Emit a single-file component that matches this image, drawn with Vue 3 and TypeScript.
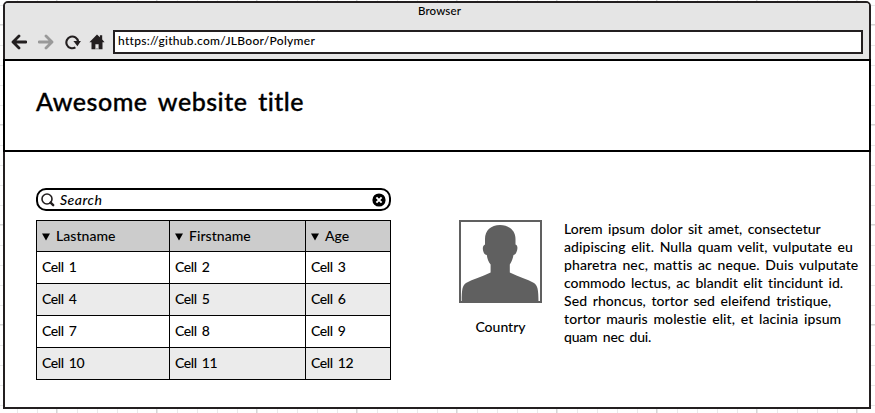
<script setup lang="ts">
const columns: string[] = ['Lastname', 'Firstname', 'Age']
const rows: string[][] = [0, 3, 6, 9].map((n) => [1, 2, 3].map((i) => `Cell ${n + i}`))

interface Line {
  text: string
  fit: string
}
const bio: Line[] = [
  { text: 'Lorem ipsum dolor sit amet, consectetur', fit: 'snug' },
  { text: 'adipiscing elit. Nulla quam velit, vulputate eu', fit: 'loose' },
  { text: 'pharetra nec, mattis ac neque. Duis vulputate', fit: 'looser' },
  { text: 'commodo lectus, ac blandit elit tincidunt id.', fit: 'snug' },
  { text: 'Sed rhoncus, tortor sed eleifend tristique,', fit: 'loose' },
  { text: 'tortor mauris molestie elit, et lacinia ipsum', fit: 'looser' },
  { text: 'quam nec dui.', fit: 'tight' },
]
</script>

<template>
  <div class="canvas">
    <div class="browser">
      <header class="chrome">
        <div class="window-title">Browser</div>
        <div class="toolbar">
          <svg class="icon" viewBox="0 0 16 16"><path d="M15 8H2.5M8 2L2 8l6 6" /></svg>
          <svg class="icon forward" viewBox="0 0 16 16"><path d="M1 8h12.5M8 2l6 6-6 6" /></svg>
          <svg class="icon refresh" viewBox="0 0 16 16">
            <path d="M10.4 13.4A5.9 5.9 0 1 1 13.1 7.5" />
            <path class="solid" d="M8.4 7.1h7.5l-3.5 5.2z" />
          </svg>
          <svg class="icon home" viewBox="0 0 16 16">
            <path class="solid" d="M8 .6L.4 8.2h2.1v7.1h3.9v-5h3.2v5h3.9V8.2h2.1L13.2 5.5V1.3h-2.3v1.9z" />
            <path class="step" d="M6.4 14.8h3.2" />
          </svg>
          <div class="address">https://github.com/JLBoor/Polymer</div>
        </div>
      </header>

      <section class="banner"><h1>Awesome website title</h1></section>

      <main class="content">
        <div class="listing">
          <div class="search">
            <svg class="glass" viewBox="0 0 14 14"><circle cx="6" cy="6" r="5" /><path d="M9.6 9.6l2.6 2.6" /></svg>
            <span>Search</span>
            <svg class="clear" viewBox="0 0 14 14"><circle cx="7" cy="7" r="6.6" /><path d="M4.4 4.4l5.2 5.2M9.6 4.4L4.4 9.6" /></svg>
          </div>
          <div class="table">
            <div v-for="c in columns" :key="c" class="cell head">
              <svg class="caret" viewBox="0 0 9 8"><path d="M0 0h9L4.5 8z" /></svg>{{ c }}
            </div>
            <template v-for="(row, r) in rows" :key="r">
              <div v-for="cell in row" :key="cell" class="cell" :class="{ striped: r % 2 === 1 }">{{ cell }}</div>
            </template>
          </div>
        </div>

        <figure class="profile">
          <svg class="avatar" viewBox="0 0 83 83">
            <rect x="1" y="1" width="81" height="81" />
            <path d="M41 5C50 5 56.5 10.5 56.5 19v5.5C59 25.5 58.8 29 57.5 32 56.6 34.3 55.5 35 54.5 35 53.8 39 52.5 42 50.8 44.5V52.5C60 57 68 59 75 63 78.5 65.5 79.5 69 79.5 82H2.7C2.7 69 3.5 65.5 7 63 14 59 22.5 57 31.6 52.5V44.5C29.5 42 28.3 39 27.8 35 26.5 35 25.4 34.3 24.5 32 23.3 29 23.6 25.5 26 24.5V19C26 10.5 32 5 41 5z" />
          </svg>
          <figcaption>Country</figcaption>
        </figure>

        <p class="bio">
          <span v-for="line in bio" :key="line.text" :class="line.fit">{{ line.text }}</span>
        </p>
      </main>
    </div>
  </div>
</template>

<style>
body {
  margin: 0;
  background: #fff;
}
</style>

<style scoped>
* {
  box-sizing: border-box;
}
.canvas {
  width: 875px;
  height: 413px;
  padding: 1px 4px 4px 3px;
  overflow: hidden;
  font: 500 14px/18px Lato, "Open Sans", sans-serif;
  font-variant-ligatures: none;
  color: #000;
  background-image:
    linear-gradient(90deg, #d6d6d6 1px, transparent 1px),
    linear-gradient(#d6d6d6 1px, transparent 1px),
    linear-gradient(90deg, #e9e9e9 1px, transparent 1px),
    linear-gradient(#e9e9e9 1px, transparent 1px);
  background-size: 100px 100px, 100px 100px, 20px 20px, 20px 20px;
  background-position: 56px 0, 0 24px, 17px 0, 0 5px;
}
.browser {
  height: 408px;
  border: 2px solid #231f20;
  border-radius: 5px 5px 0 0;
  background: #fff;
}
.chrome {
  height: 56px;
  background: #e5e5e5;
  border-radius: 3px 3px 0 0;
}
.window-title {
  height: 27px;
  padding-left: 5px;
  text-align: center;
  font-size: 11.5px;
  line-height: 16px;
  letter-spacing: 0.15px;
}
.toolbar {
  display: flex;
  align-items: center;
  height: 24px;
  padding: 0 6px;
}
.icon {
  flex: none;
  width: 16px;
  height: 16px;
  margin-right: 11px;
  fill: none;
  stroke: #231f20;
  stroke-width: 2.8;
  stroke-linecap: round;
  stroke-linejoin: round;
}
.forward {
  stroke: #999;
}
.refresh {
  stroke-width: 2.1;
  stroke-linecap: butt;
  margin-right: 8px;
}
.home {
  margin-right: 8px;
}
.solid {
  fill: #231f20;
  stroke: none;
}
.step {
  stroke: #888;
  stroke-width: 1;
  stroke-linecap: butt;
}
.address {
  width: 750px;
  height: 24px;
  padding-left: 3px;
  border: 2px solid #231f20;
  background: #fff;
  font-size: 12px;
  line-height: 18px;
  letter-spacing: 0.3px;
}
.banner {
  height: 93px;
  margin: 0 -2px;
  padding: 25px 31px;
  border: 2px solid #000;
}
h1 {
  margin: 0;
  font-size: 25px;
  font-weight: 500;
  line-height: 30px;
  letter-spacing: 0.5px;
  word-spacing: 4px;
  -webkit-text-stroke: 0.35px #000;
}
.content {
  display: flex;
  align-items: flex-start;
  padding: 36px 9px 0 31px;
}
.listing {
  width: 355px;
  margin-right: 68px;
}
.search {
  display: flex;
  align-items: center;
  height: 23px;
  margin-bottom: 9px;
  padding: 0 3px;
  border: 2px solid #000;
  border-radius: 10px;
  font-style: italic;
  letter-spacing: 0.5px;
}
.search span {
  flex: 1;
  padding: 1px 0 0 5px;
}
.glass,
.clear {
  width: 14px;
  height: 14px;
}
.glass {
  fill: none;
  stroke: #231f20;
  stroke-width: 1.6;
}
.glass path {
  stroke-width: 2.4;
  stroke-linecap: round;
}
.clear path {
  stroke: #fff;
  stroke-width: 2;
}
.table {
  display: grid;
  grid-template-columns: 132px 135px 84px;
  grid-template-rows: 30px repeat(4, 31px);
  gap: 1px;
  padding: 1px;
  background: #000;
}
.cell {
  display: flex;
  align-items: center;
  padding: 0 0 1px 5px;
  background: #fff;
  letter-spacing: -0.4px;
  word-spacing: 2px;
}
.striped {
  background: #ebebeb;
}
.head {
  padding-bottom: 0;
  background: #ccc;
  letter-spacing: 0.05px;
}
.caret {
  width: 8px;
  height: 8px;
  margin: 2px 6px 0 0;
}
.profile {
  width: 83px;
  margin: 32px 21px 0 0;
  text-align: center;
}
.avatar {
  display: block;
  width: 83px;
  height: 83px;
  fill: #606060;
}
.avatar rect {
  fill: #fff;
  stroke: #606060;
  stroke-width: 2;
}
figcaption {
  margin-top: 15px;
}
.bio {
  flex: 1;
  margin: 32px 0 0;
  padding-left: 1px;
  white-space: nowrap;
  word-spacing: 2px;
}
.bio span {
  display: block;
}
.loose {
  letter-spacing: 0.07px;
}
.looser {
  letter-spacing: 0.1px;
}
.tight {
  letter-spacing: -0.2px;
}
</style>
